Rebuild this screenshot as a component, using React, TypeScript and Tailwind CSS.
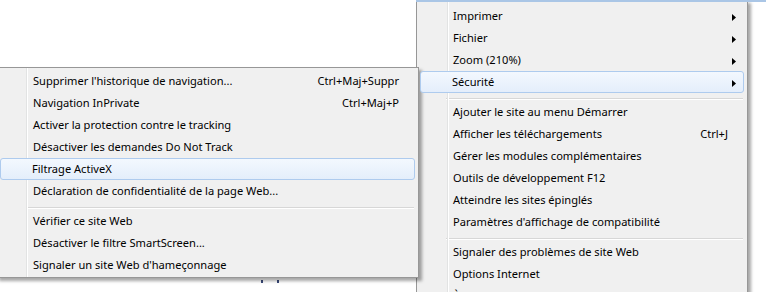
// App.tsx
// IE9 style "Sécurité" cascading context menu, Windows 7 look.

type Row = { label: string; shortcut?: string; sub?: boolean; active?: boolean } | 'sep';

const MAIN_ITEMS: Row[] = [
  { label: 'Imprimer', sub: true },
  { label: 'Fichier', sub: true },
  { label: 'Zoom (210%)', sub: true },
  { label: 'Sécurité', sub: true, active: true },
  'sep',
  { label: 'Ajouter le site au menu Démarrer' },
  { label: 'Afficher les téléchargements', shortcut: 'Ctrl+J' },
  { label: 'Gérer les modules complémentaires' },
  { label: 'Outils de développement F12' },
  { label: 'Atteindre les sites épinglés' },
  { label: "Paramètres d'affichage de compatibilité" },
  'sep',
  { label: 'Signaler des problèmes de site Web' },
  { label: 'Options Internet' },
  { label: "À propos d'Internet Explorer" },
];

const SECURITY_ITEMS: Row[] = [
  { label: "Supprimer l'historique de navigation...", shortcut: 'Ctrl+Maj+Suppr' },
  { label: 'Navigation InPrivate', shortcut: 'Ctrl+Maj+P' },
  { label: 'Activer la protection contre le tracking' },
  { label: 'Désactiver les demandes Do Not Track' },
  { label: 'Filtrage ActiveX', active: true },
  { label: 'Déclaration de confidentialité de la page Web...' },
  'sep',
  { label: 'Vérifier ce site Web' },
  { label: 'Désactiver le filtre SmartScreen...' },
  { label: "Signaler un site Web d'hameçonnage" },
];

function SubArrow() {
  return (
    <svg className="absolute right-[7px] top-[8px]" width="4" height="7" viewBox="0 0 4 7">
      <path d="M0 0 L4 3.5 L0 7 Z" fill="#000" />
    </svg>
  );
}

function MenuRows({ items }: { items: Row[] }) {
  return (
    <div className="flex flex-col">
      {items.map((it, i) =>
        it === 'sep' ? (
          <div key={i} className="flex flex-col pt-[5px] pb-px ml-[26px] mr-px">
            <div className="h-px bg-[#d7d7d7]" />
            <div className="h-px bg-white" />
          </div>
        ) : (
          <div
            key={i}
            className={
              it.active
                ? 'relative z-10 flex items-center h-[22px] pl-[31px] pr-[14px] rounded-[3px] border border-[#aecbee] bg-gradient-to-b from-[#f3f8fe] to-[#e4eefb]'
                : 'relative z-10 flex items-center h-[22px] pl-[32px] pr-[15px] border border-transparent'
            }
          >
            <span className="flex-1 whitespace-nowrap">{it.label}</span>
            {it.shortcut && <span className="whitespace-nowrap">{it.shortcut}</span>}
            {it.sub && <SubArrow />}
          </div>
        )
      )}
    </div>
  );
}

export default function App() {
  return (
    <div className="relative w-[766px] h-[298px] overflow-hidden bg-white text-[11.1px] leading-none text-black font-['Segoe_UI','Noto_Sans',sans-serif]">
      {/* page text peeking under the submenu */}
      <span className="absolute left-[261px] top-[280px] w-[2px] h-[3px] bg-[#3a4a7a]" />
      <span className="absolute left-[277px] top-[280px] w-[2px] h-[3px] bg-[#3a4a7a]" />

      {/* main tools menu, clipped by the screenshot bottom */}
      <div className="absolute left-[416px] top-0 w-[340px] h-[292px] overflow-hidden">
        <div className="relative w-[332px] border-x border-b border-[#979797] bg-[#f0f0f0] pt-[5px] pb-[2px] px-[3px] shadow-[3px_3px_3px_rgba(0,0,0,0.35)]">
          <div className="absolute top-0 bottom-0 left-[30px] w-px bg-[#e2e3e3]" />
          <div className="absolute top-0 bottom-0 left-[31px] w-px bg-white" />
          <MenuRows items={MAIN_ITEMS} />
        </div>
      </div>
      <div className="absolute left-[416px] right-0 top-0 h-[2px] bg-[#aac6e6]" />

      {/* Sécurité submenu */}
      <div className="absolute left-[-4px] top-[67px] w-[423px] border border-[#979797] bg-[#f0f0f0] pt-[2px] pb-px px-[3px] shadow-[3px_3px_3px_rgba(0,0,0,0.35)]">
        <div className="absolute top-0 bottom-0 left-[29px] w-px bg-[#e2e3e3]" />
        <div className="absolute top-0 bottom-0 left-[30px] w-px bg-white" />
        <MenuRows items={SECURITY_ITEMS} />
      </div>
    </div>
  );
}
